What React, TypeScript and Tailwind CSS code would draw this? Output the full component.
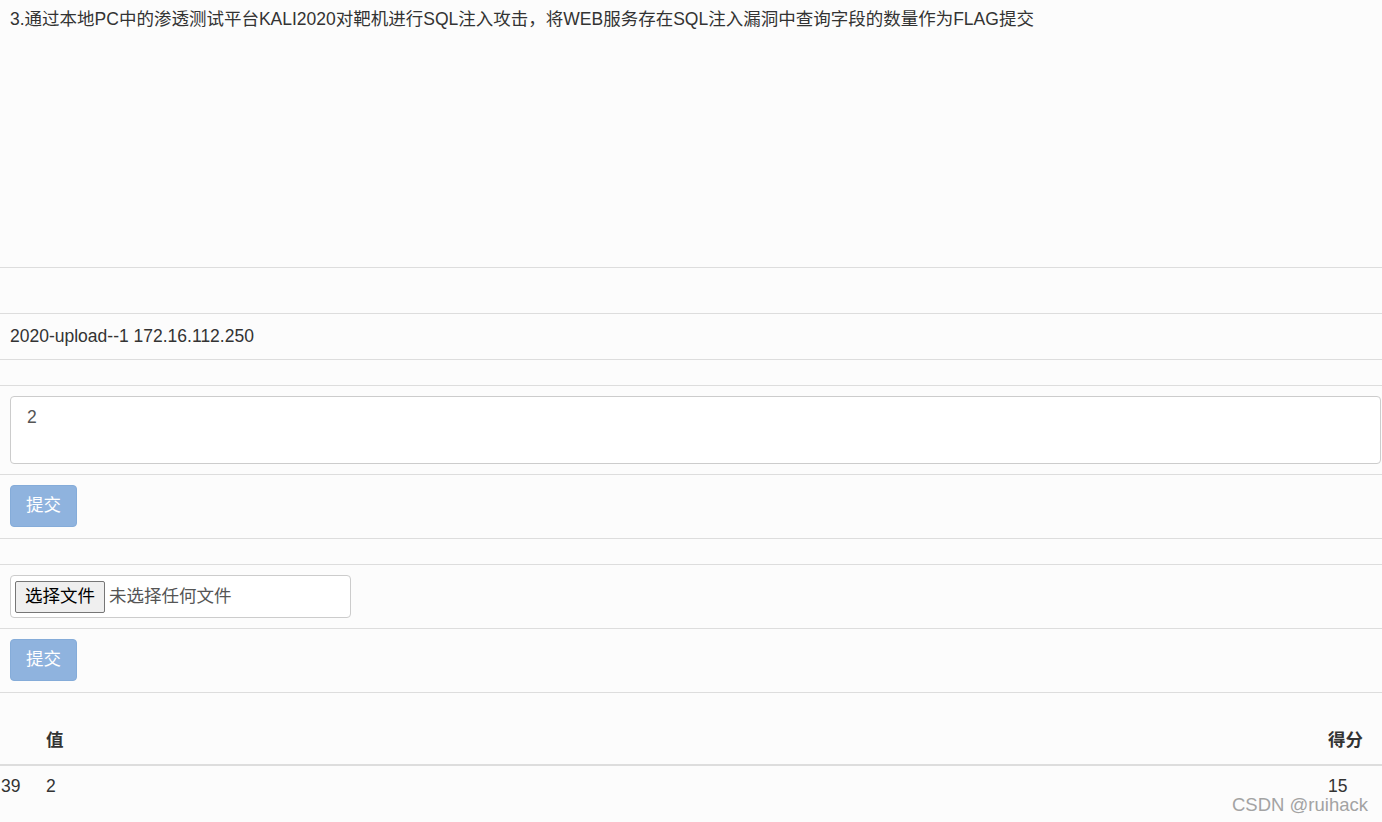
import React from "react";

const font = "font-['Liberation_Sans','Noto_Sans_CJK_SC',sans-serif]";

const SubmitButton = () => (
  <button
    type="button"
    className="w-[67px] h-[42px] rounded-[4px] bg-[#8fb3de] border border-[#85acd9] text-white text-[17.5px] leading-none"
  >
    提交
  </button>
);

export default function App() {
  return (
    <div className={`relative w-[1382px] h-[822px] overflow-hidden bg-[#fcfcfc] text-[#333] text-[17.5px] ${font}`}>
      {/* question */}
      <div className="h-[268px] border-b border-[#ddd] px-[10px] pt-[7px] leading-[24px]">
        3.通过本地PC中的渗透测试平台KALI2020对靶机进行SQL注入攻击，将WEB服务存在SQL注入漏洞中查询字段的数量作为FLAG提交
      </div>
      <div className="h-[46px] border-b border-[#ddd]" />
      {/* target */}
      <div className="h-[46px] border-b border-[#ddd] px-[10px] flex items-center">
        2020-upload--1 172.16.112.250
      </div>
      <div className="h-[26px] border-b border-[#ddd]" />
      {/* answer */}
      <div className="h-[89px] border-b border-[#ddd] pl-[10px] pr-[1px] pt-[10px]">
        <div className="h-[68px] w-full rounded-[4px] border border-[#ccc] bg-white pl-[16px] pt-[8px] leading-[24px] text-[#555]">
          2
        </div>
      </div>
      <div className="h-[64px] border-b border-[#ddd] px-[10px] pt-[10px]">
        <SubmitButton />
      </div>
      <div className="h-[26px] border-b border-[#ddd]" />
      {/* file upload */}
      <div className="h-[64px] border-b border-[#ddd] px-[10px] pt-[10px]">
        <div className="w-[341px] h-[43px] rounded-[4px] border border-[#ccc] bg-white flex items-center pl-[4px] gap-[4px]">
          <span className="h-[32px] w-[90px] flex items-center justify-center bg-[#efefef] border border-[#767676] rounded-[2px] text-black text-[17.5px]">
            选择文件
          </span>
          <span className="text-[17.5px] text-[#555]">未选择任何文件</span>
        </div>
      </div>
      <div className="h-[64px] border-b border-[#ddd] px-[10px] pt-[10px]">
        <SubmitButton />
      </div>
      {/* results */}
      <table className="w-full border-collapse">
        <thead>
          <tr className="h-[72px] border-b-2 border-[#ddd]">
            <th className="w-[38px] p-0" />
            <th className="text-left align-bottom px-[8px] pb-[12px] font-bold leading-[24px]">值</th>
            <th className="w-[62px] text-left align-bottom px-[8px] pb-[12px] font-bold leading-[24px]">得分</th>
          </tr>
        </thead>
        <tbody>
          <tr>
            <td className="pl-[1px] pt-[8px] leading-[24px]">39</td>
            <td className="px-[8px] pt-[8px] leading-[24px]">2</td>
            <td className="px-[8px] pt-[8px] leading-[24px]">15</td>
          </tr>
        </tbody>
      </table>
      <div className="absolute left-[1232px] top-[794px] text-[18.5px] leading-[22px] text-[#a3a3a3] font-['Liberation_Sans',sans-serif]">
        CSDN @ruihack
      </div>
    </div>
  );
}
